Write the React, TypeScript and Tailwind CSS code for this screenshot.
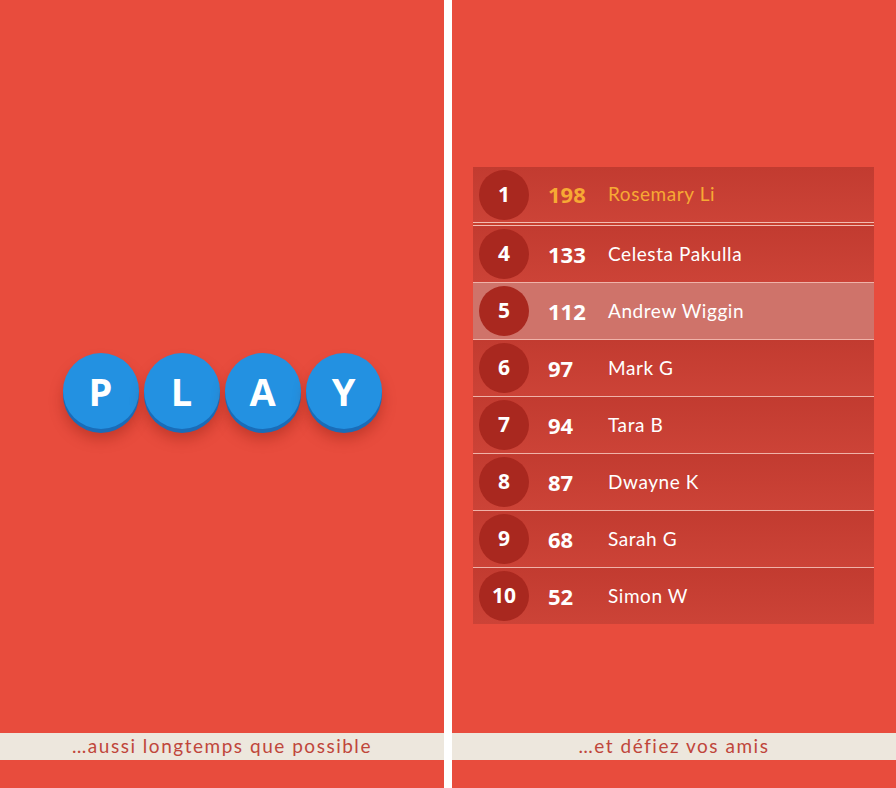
const letters = ["P", "L", "A", "Y"];

type Entry = { rank: number; score: number; name: string };

const leaders: Entry[] = [
  { rank: 4, score: 133, name: "Celesta Pakulla" },
  { rank: 5, score: 112, name: "Andrew Wiggin" },
  { rank: 6, score: 97, name: "Mark G" },
  { rank: 7, score: 94, name: "Tara B" },
  { rank: 8, score: 87, name: "Dwayne K" },
  { rank: 9, score: 68, name: "Sarah G" },
  { rank: 10, score: 52, name: "Simon W" },
];

const Caption = ({ text }: { text: string }) => (
  <div className="mt-auto mb-[28px] flex h-[27px] items-center justify-center bg-[#ede7dd]">
    <span className="font-['Lato',sans-serif] text-[19px] tracking-[0.08em] text-[#c0463b]">
      {text}
    </span>
  </div>
);

const Row = ({ entry, highlight, top }: { entry: Entry; highlight?: boolean; top?: boolean }) => {
  const bg = highlight
    ? "bg-[#cf736a]"
    : "bg-gradient-to-b from-[#c23b30] to-[#cc4337]";
  const text = top ? "text-[#f7a934]" : "text-white";
  const height = top ? "h-[55px]" : "h-[56px]";
  return (
    <div className={`flex ${height} items-center ${bg}`}>
      <div className="ml-[6px] flex h-[50px] w-[50px] items-center justify-center rounded-full bg-[#a9281f]">
        <span className="font-['Open_Sans',sans-serif] text-[21px] font-bold text-white">
          {entry.rank}
        </span>
      </div>
      <span className={`ml-[19px] w-[60px] font-['Open_Sans',sans-serif] text-[22px] font-bold ${text}`}>
        {entry.score}
      </span>
      <span className={`font-['Lato',sans-serif] text-[19px] tracking-[0.03em] ${text}`}>
        {entry.name}
      </span>
    </div>
  );
};

const App = () => {
  return (
    <div className="flex h-[788px] w-[896px] bg-white">
      {/* left screen: play buttons */}
      <div className="flex w-[444px] flex-col bg-[#e84c3d]">
        <div className="flex justify-center gap-[5px] pt-[353px]">
          {letters.map((l) => (
            <div
              key={l}
              className="flex h-[76px] w-[76px] items-center justify-center rounded-full bg-[#2391e1] shadow-[0_4px_0_#1a6cb8,0_10px_14px_rgba(120,20,10,0.35)]"
            >
              <span className="font-['Open_Sans',sans-serif] text-[38px] font-bold leading-none text-white">
                {l}
              </span>
            </div>
          ))}
        </div>
        <Caption text="…aussi longtemps que possible" />
      </div>

      {/* right screen: leaderboard */}
      <div className="ml-[8px] flex w-[444px] flex-col bg-[#e84c3d]">
        <div className="mx-[21px] mt-[167px] w-[401px]">
          <Row entry={{ rank: 1, score: 198, name: "Rosemary Li" }} top />
          <div className="h-[4px] border-y border-[#f3bcb2] bg-[#c8402f]" />
          {leaders.map((e, i) => (
            <div key={e.rank} className={i > 0 ? "border-t border-[#f0b2a8]" : ""}>
              <Row entry={e} highlight={e.rank === 5} />
            </div>
          ))}
        </div>
        <Caption text="…et défiez vos amis" />
      </div>
    </div>
  );
};

export default App;
